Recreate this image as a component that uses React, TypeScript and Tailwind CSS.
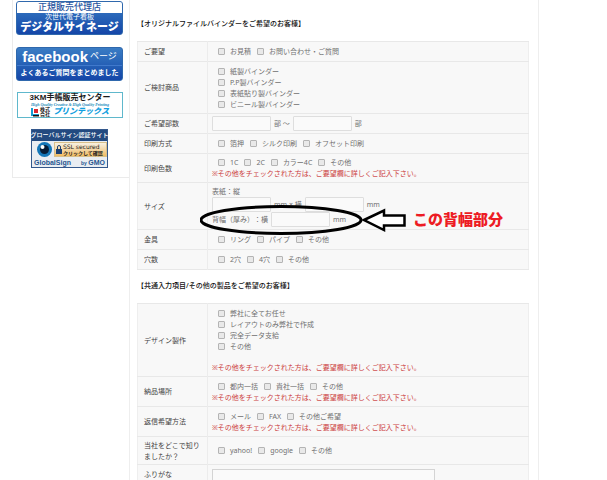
import React from "react";

const note = "※その他をチェックされた方は、ご要望欄に詳しくご記入下さい。";

const Note: React.FC = () => (
  <p className="text-[#cc4040] whitespace-nowrap">{note}</p>
);

const Choice: React.FC<{ text: string }> = ({ text }) => (
  <label className="flex items-center gap-[5px] whitespace-nowrap">
    <input
      type="checkbox"
      className="appearance-none size-[7px] shrink-0 rounded-[1px] border border-[#b4b4b4] bg-[#e9e9e9]"
    />
    {text}
  </label>
);

const Choices: React.FC<{ items: string[]; stacked?: boolean }> = ({
  items,
  stacked,
}) => (
  <div
    className={
      stacked ? "flex flex-col pl-1.5" : "flex items-center gap-1.5 pl-1.5"
    }
  >
    {items.map((item) => (
      <Choice key={item} text={item} />
    ))}
  </div>
);

const Box: React.FC<{ label: string }> = ({ label }) => (
  <input
    type="text"
    aria-label={label}
    className="w-[59px] h-[15px] rounded-[1px] border border-[#dedede] bg-[#fafafa] px-1"
  />
);

const Row: React.FC<{
  title: string;
  height: string;
  children: React.ReactNode;
}> = ({ title, height, children }) => (
  <tr className={`${height} border-y border-[#e8e8e8]`}>
    <th
      scope="row"
      className="w-[70px] pl-1.5 pr-1 text-left font-normal text-[#444] border-r border-[#ececec]"
    >
      {title}
    </th>
    <td className="pl-1 text-[#707070]">{children}</td>
  </tr>
);

const Table: React.FC<{ children: React.ReactNode }> = ({ children }) => (
  <table className="w-full border-collapse border border-[#eee] bg-[#f8f8f8]">
    <tbody>{children}</tbody>
  </table>
);

// Hand-drawn marker around the spine width field
const SpineMarker: React.FC = () => (
  <div className="absolute -left-3 top-[18px] flex items-center pointer-events-none">
    <svg width="208" height="32" viewBox="0 0 208 32" fill="none" stroke="#000">
      <ellipse cx="81" cy="16" rx="80" ry="13.5" strokeWidth="3" />
      <path
        d="M164 16 L184 6.5 V11.5 H204.500 V21.500 H184 V26 Z"
        fill="#fff"
        strokeWidth="2.5"
      />
    </svg>
    <span className="ml-[5px] text-[15px] leading-none font-black text-[#ed1c24] whitespace-nowrap">
      この背幅部分
    </span>
  </div>
);

const Sidebar: React.FC = () => (
  <aside className="w-[117px] h-[178px] shrink-0 border-l border-b border-[#ebebeb] pl-[3px] pt-px flex flex-col items-start whitespace-nowrap font-['Liberation_Sans','Noto_Sans_CJK_JP',sans-serif]">
    <a
      href="#signage"
      className="w-[107px] h-[34px] rounded-[3px] border border-[#2f68ad] bg-linear-to-b from-[#3a7cc4] to-[#1546a8] flex flex-col items-center overflow-hidden text-white"
    >
      <span className="w-full h-[11px] bg-white text-center text-[9px] leading-[11px] font-medium text-[#2a55a0]">
        正規販売代理店
      </span>
      <span className="text-[7px] leading-[8px]">次世代電子看板</span>
      <span className="text-[11px] leading-[13px] font-black">
        デジタルサイネージ
      </span>
    </a>
    <a
      href="#facebook"
      className="mt-3 w-[107px] h-[34px] rounded-[3px] border border-[#2f68ad] bg-linear-to-b from-[#3a7cc4] to-[#1546a8] flex flex-col items-center text-white"
    >
      <span className="w-full h-[18px] border-b border-[#4079cc] flex items-center justify-center gap-0.5">
        <b className="text-[15px] leading-none">facebook</b>
        <span className="text-[9px]">ページ</span>
      </span>
      <span className="text-[7px] leading-[14px] font-bold">
        よくあるご質問をまとめました
      </span>
    </a>
    <a
      href="#center"
      className="mt-[11px] ml-px w-[106px] h-[26px] border border-[#5fb8cc] bg-white flex flex-col items-center text-[#1a1a1a]"
    >
      <span className="text-[8px] leading-[10px] font-bold">
        3KM手帳販売センター
      </span>
      <i className="font-['Liberation_Serif',serif] text-[4px] leading-[4px] font-bold text-[#1687b8]">
        High Quality Creative &amp; High Quality Printing
      </i>
      <span className="flex items-center h-[10px]">
        <svg width="8" height="9" viewBox="0 0 8 9">
          <path d="M0 0h2v6h6v2H0z" fill="#159bd0" />
          <path d="M3 1h4v4H3z" fill="#d9262e" />
          <path d="M2 7h6v1.500H2z" fill="#111" />
        </svg>
        <span className="ml-px text-[5px] leading-[5px] font-bold">
          株式
          <br />
          会社
        </span>
        <i className="ml-[3px] text-[8px] leading-[10px] font-black text-[#12a0e0]">
          プリンテックス
        </i>
      </span>
    </a>
    <a
      href="#globalsign"
      className="mt-[11px] ml-[15px] w-[77px] h-[39px] border border-[#34588c] bg-[#e9edf2] flex flex-col"
    >
      <span className="h-[11px] bg-[#234a80] flex justify-center text-[6px] leading-[11px] font-medium text-white">
        グローバルサイン認証サイト
      </span>
      <span className="flex h-[17px] items-center">
        <svg
          className="ml-1 shrink-0"
          width="17"
          height="17"
          viewBox="0 0 17 17"
        >
          <circle cx="8.500" cy="8.500" r="7.500" fill="#1376b8" />
          <circle cx="8.500" cy="8.500" r="4.500" fill="#061c36" />
          <circle cx="6.500" cy="6" r="2" fill="#fff" />
        </svg>
        <span className="ml-px flex-1 h-[15px] border border-[#d9c08a] bg-linear-to-b from-[#f7f1e2] to-[#f0bb60] flex items-center">
          <svg className="shrink-0" width="8" height="11" viewBox="0 0 8 11">
            <path
              d="M2.500 5V3a1.500 1.500 0 0 1 3 0v2"
              fill="none"
              stroke="#1d3f70"
            />
            <path d="M1 5h6v5H1z" fill="#1d3f70" />
          </svg>
          <span className="flex flex-col text-[5px] leading-[6px] text-[#222]">
            <span className="text-[6px] font-['DejaVu_Sans',sans-serif]">
              SSL secured
            </span>
            <b className="font-bold">クリックして確認</b>
          </span>
        </span>
      </span>
      <span className="flex items-center justify-between px-0.5 h-[9px] font-bold text-[#1f5590]">
        <span className="text-[7px] leading-[9px]">GlobalSign</span>
        <span className="text-[5px] leading-[9px]">
          by <b className="text-[7px]">GMO</b>
        </span>
      </span>
    </a>
  </aside>
);

const App: React.FC = () => {
  return (
    <div
      lang="ja"
      className="h-screen overflow-hidden bg-white pl-3 pr-[68px] flex items-start font-['Noto_Sans','Noto_Sans_CJK_JP',sans-serif] text-[7px] leading-[11px]"
    >
      <Sidebar />
      <main className="flex-1 min-w-0 min-h-screen border-x border-[#eeeeee] pl-[7px] pr-[9px]">
        <h2 className="pt-[18px] pb-3 font-medium text-[#111]">
          【オリジナルファイルバインダーをご希望のお客様】
        </h2>
        <Table>
          <Row title="ご要望" height="h-5">
            <Choices items={["お見積", "お問い合わせ・ご質問"]} />
          </Row>
          <Row title="ご検討商品" height="h-[52px]">
            <Choices
              stacked
              items={[
                "紙製バインダー",
                "P.P製バインダー",
                "表紙貼り製バインダー",
                "ビニール製バインダー",
              ]}
            />
          </Row>
          <Row title="ご希望部数" height="h-5">
            <div className="flex items-center gap-[3px]">
              <Box label="ご希望部数（最小）" />
              部 ～
              <Box label="ご希望部数（最大）" />部
            </div>
          </Row>
          <Row title="印刷方式" height="h-5">
            <Choices items={["箔押", "シルク印刷", "オフセット印刷"]} />
          </Row>
          <Row title="印刷色数" height="h-[29px]">
            <Choices items={["1C", "2C", "カラー4C", "その他"]} />
            <Note />
          </Row>
          <Row title="サイズ" height="h-[47px]">
            <div className="relative [text-spacing-trim:space-all]">
              <p>表紙：縦</p>
              <div className="flex items-center gap-[3px]">
                <Box label="表紙の縦" />
                mm × 横
                <Box label="表紙の横" />
                mm
              </div>
              <div className="flex items-center gap-[3px]">
                背幅（厚み）：横
                <Box label="背幅" />
                mm
              </div>
              <SpineMarker />
            </div>
          </Row>
          <Row title="金具" height="h-5">
            <Choices items={["リング", "パイプ", "その他"]} />
          </Row>
          <Row title="穴数" height="h-5">
            <Choices items={["2穴", "4穴", "その他"]} />
          </Row>
        </Table>

        <h2 className="pt-2.5 pb-3 font-medium text-[#111]">
          【共通入力項目/その他の製品をご希望のお客様】
        </h2>
        <Table>
          <Row title="デザイン製作" height="h-[73px]">
            <Choices
              stacked
              items={[
                "弊社に全てお任せ",
                "レイアウトのみ弊社で作成",
                "完全データ支給",
                "その他",
              ]}
            />
            <div className="pt-2.5">
              <Note />
            </div>
          </Row>
          <Row title="納品場所" height="h-[30px]">
            <Choices items={["都内一括", "貴社一括", "その他"]} />
            <Note />
          </Row>
          <Row title="返信希望方法" height="h-[30px]">
            <Choices items={["メール", "FAX", "その他ご希望"]} />
            <Note />
          </Row>
          <Row title="当社をどこで知りましたか？" height="h-7">
            <Choices items={["yahoo!", "google", "その他"]} />
          </Row>
          <Row title="ふりがな" height="h-5">
            <input
              type="text"
              aria-label="ふりがな"
              className="mt-[3px] w-[223px] h-[15px] border border-[#d4d4d4] bg-[#fafafa] px-1"
            />
          </Row>
        </Table>
      </main>
    </div>
  );
};

export default App;
